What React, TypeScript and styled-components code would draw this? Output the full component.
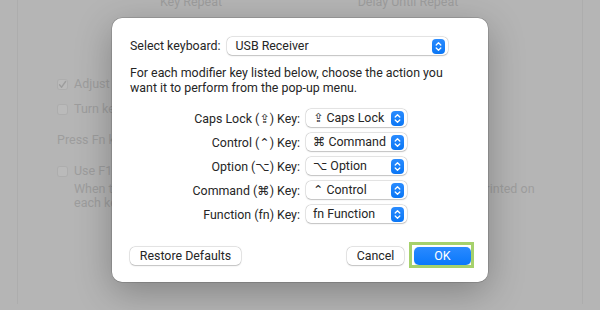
import React from 'react';
import styled, { createGlobalStyle } from 'styled-components';

const Global = createGlobalStyle`
  html, body { margin: 0; padding: 0; }
  body {
    font-family: Roboto, "Noto Sans", "DejaVu Sans", sans-serif;
    -webkit-font-smoothing: antialiased;
  }
`;

const Page = styled.div`
  position: relative;
  width: 600px;
  height: 310px;
  overflow: hidden;
  background: #b5b5b5;
  font-family: Roboto, "DejaVu Sans", sans-serif;
`;

const Backdrop = styled.div`
  box-sizing: border-box;
  margin: 0 17px;
  height: 100%;
  border-left: 1px solid rgba(0, 0, 0, 0.04);
  border-right: 1px solid rgba(0, 0, 0, 0.04);
  color: #9d9d9d;
  font-size: 12.5px;
  line-height: 16px;
`;

const HeaderRow = styled.div`
  display: grid;
  grid-template-columns: 200px 200px;
  column-gap: 17px;
  justify-items: center;
  padding-left: 73px;
  margin-top: -6px;
`;

const Settings = styled.div`
  padding-left: 39px;
  display: flex;
  flex-direction: column;
`;

const CheckRow = styled.div<{ $mt: number }>`
  display: flex;
  align-items: center;
  gap: 6px;
  height: 16px;
  margin-top: ${(p) => p.$mt}px;
  white-space: nowrap;
`;

const CheckBox = styled.span`
  box-sizing: border-box;
  width: 11px;
  height: 11px;
  border-radius: 3px;
  border: 1px solid rgba(0, 0, 0, 0.07);
  background: rgba(255, 255, 255, 0.08);
  display: flex;
  align-items: center;
  justify-content: center;
`;

const PlainLine = styled.div<{ $mt: number }>`
  margin-top: ${(p) => p.$mt}px;
  height: 16px;
  white-space: nowrap;
`;

const Description = styled.div`
  padding-left: 17px;
  margin-top: 3px;
  line-height: 14px;
  white-space: nowrap;
`;

const Dialog = styled.div`
  position: absolute;
  left: 112px;
  top: 18px;
  width: 376px;
  height: 264px;
  box-sizing: border-box;
  background: #ffffff;
  border-radius: 10px;
  box-shadow: 0 0 0 0.5px rgba(0, 0, 0, 0.25), 0 10px 36px rgba(0, 0, 0, 0.28);
  padding: 19px 17px 17px 18px;
  display: flex;
  flex-direction: column;
  color: #262626;
  font-size: 12.4px;
`;

const KeyboardRow = styled.div`
  display: flex;
  align-items: center;
  gap: 7px;
`;

const Label = styled.span`
  white-space: nowrap;
  line-height: 18px;
`;

const Para = styled.p`
  margin: 10px 0 0;
  line-height: 15px;
  white-space: nowrap;
`;

const MapGrid = styled.div`
  margin-top: 14px;
  display: grid;
  grid-template-columns: 170px 101px;
  column-gap: 6px;
  row-gap: 6px;
  align-items: center;
`;

const RowLabel = styled.span`
  text-align: right;
  white-space: nowrap;
`;

const SelectBox = styled.div<{ $w: number; $pl: number }>`
  box-sizing: border-box;
  width: ${(p) => p.$w}px;
  height: 18px;
  border-radius: 5px;
  background: #fff;
  box-shadow: 0 0 0 0.5px rgba(0, 0, 0, 0.16), 0 0.5px 1.5px rgba(0, 0, 0, 0.18);
  display: flex;
  align-items: center;
  padding: 0 3px 0 ${(p) => p.$pl}px;
`;

const SelectText = styled.span`
  flex: 1;
  white-space: nowrap;
  line-height: 18px;
`;

const Stepper = styled.span`
  width: 13px;
  height: 15px;
  border-radius: 4px;
  background: linear-gradient(#2a8cff, #0a76f5);
  display: flex;
  align-items: center;
  justify-content: center;
`;

const ButtonRow = styled.div`
  margin-top: auto;
  display: flex;
  align-items: center;
`;

const Spacer = styled.div`
  flex: 1;
`;

const Button = styled.button<{ $w: number }>`
  box-sizing: border-box;
  width: ${(p) => p.$w}px;
  height: 18px;
  border: none;
  border-radius: 5px;
  background: #fff;
  box-shadow: 0 0 0 0.5px rgba(0, 0, 0, 0.16), 0 0.5px 1.5px rgba(0, 0, 0, 0.18);
  font-family: inherit;
  font-size: 12.4px;
  color: #262626;
  padding: 0;
  line-height: 18px;
`;

const PrimaryWrap = styled.div`
  position: relative;
  margin-left: 10px;
  &::after {
    content: '';
    position: absolute;
    left: -5px;
    right: -3px;
    top: -5px;
    bottom: -3px;
    border: 3px solid #a6d16c;
    pointer-events: none;
  }
`;

const PrimaryButton = styled(Button)`
  background: linear-gradient(#2a8aff, #0a78fb);
  box-shadow: 0 0.5px 1px rgba(0, 0, 0, 0.15);
  color: #fff;
  display: block;
`;

const Chevrons = () => (
  <svg width="7" height="11" viewBox="0 0 7 11">
    <path d="M1.2 4 L3.5 1.7 L5.8 4 M1.2 7 L3.5 9.3 L5.8 7" stroke="#fff" strokeWidth="1.3" fill="none" strokeLinecap="round" strokeLinejoin="round" />
  </svg>
);

const Check = () => (
  <svg width="9" height="9" viewBox="0 0 9 9">
    <path d="M1.5 4.8 L3.6 7.2 L7.6 1.5" stroke="#9d9d9d" strokeWidth="1.4" fill="none" strokeLinecap="round" strokeLinejoin="round" />
  </svg>
);

const Select = ({ value, w, pl }: { value: string; w: number; pl: number }) => (
  <SelectBox $w={w} $pl={pl}>
    <SelectText>{value}</SelectText>
    <Stepper>
      <Chevrons />
    </Stepper>
  </SelectBox>
);

const mappings = [
  { key: 'Caps Lock (⇪) Key:', action: '⇪ Caps Lock' },
  { key: 'Control (⌃) Key:', action: '⌘ Command' },
  { key: 'Option (⌥) Key:', action: '⌥ Option' },
  { key: 'Command (⌘) Key:', action: '⌃ Control' },
  { key: 'Function (fn) Key:', action: 'fn Function' },
];

export default function App() {
  return (
    <Page>
      <Global />
      <Backdrop>
        <HeaderRow>
          <span>Key Repeat</span>
          <span>Delay Until Repeat</span>
        </HeaderRow>
        <Settings>
          <CheckRow $mt={66}>
            <CheckBox>
              <Check />
            </CheckBox>
            <span>Adjust keyboard brightness in low light</span>
          </CheckRow>
          <CheckRow $mt={9}>
            <CheckBox />
            <span>Turn keyboard backlight off after 5 secs of inactivity</span>
          </CheckRow>
          <PlainLine $mt={15}>Press Fn key to: Show Emoji &amp; Symbols</PlainLine>
          <CheckRow $mt={15}>
            <CheckBox />
            <span>Use F1, F2, etc. keys as standard function keys</span>
          </CheckRow>
          <Description>
            When this option is selected, press the Fn key to use the special features printed on
            <br />
            each key.
          </Description>
        </Settings>
      </Backdrop>

      <Dialog>
        <KeyboardRow>
          <Label>Select keyboard:</Label>
          <Select value="USB Receiver" w={221} pl={8} />
        </KeyboardRow>
        <Para>
          For each modifier key listed below, choose the action you
          <br />
          want it to perform from the pop-up menu.
        </Para>
        <MapGrid>
          {mappings.map((m) => (
            <React.Fragment key={m.key}>
              <RowLabel>{m.key}</RowLabel>
              <Select value={m.action} w={101} pl={7} />
            </React.Fragment>
          ))}
        </MapGrid>
        <ButtonRow>
          <Button $w={111}>Restore Defaults</Button>
          <Spacer />
          <Button $w={57}>Cancel</Button>
          <PrimaryWrap>
            <PrimaryButton $w={57}>OK</PrimaryButton>
          </PrimaryWrap>
        </ButtonRow>
      </Dialog>
    </Page>
  );
}
